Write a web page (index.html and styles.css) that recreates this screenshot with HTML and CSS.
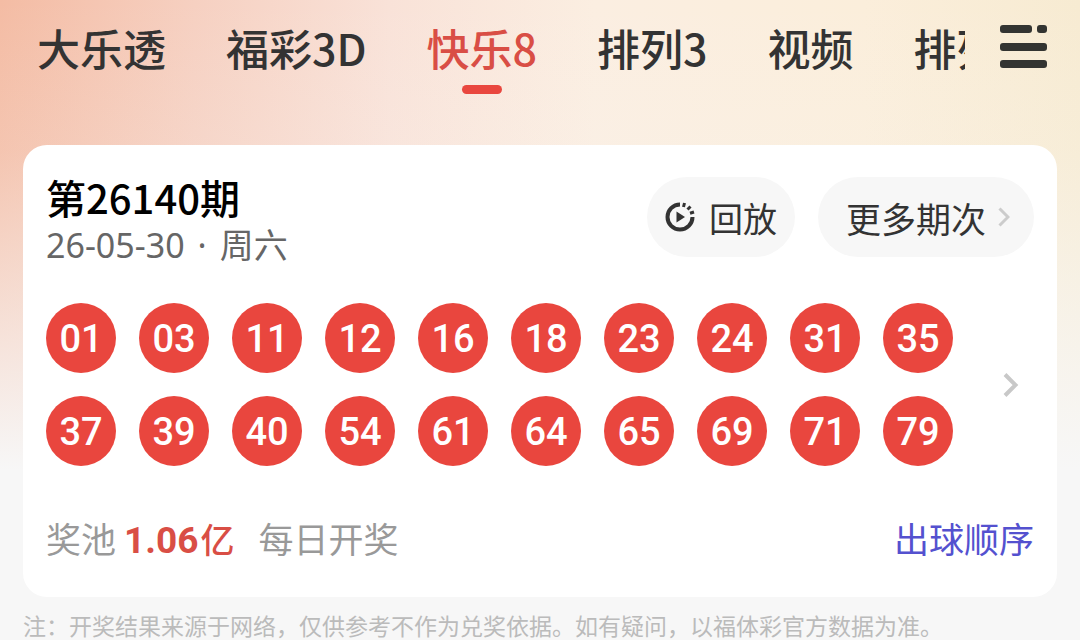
FILE: index.html
```
<!DOCTYPE html>
<html lang="zh-CN">
<head>
    <meta charset="UTF-8">
    <meta name="viewport" content="width=device-width, initial-scale=1.0">
    <title>快乐8</title>
    <link rel="stylesheet" href="styles.css">
</head>
<body>
    <!-- Top tabs -->
    <header class="top-bar">
        <nav class="tabs">
            <a class="tab" href="#">大乐透</a>
            <a class="tab" href="#">福彩3D</a>
            <a class="tab active" href="#">快乐8</a>
            <a class="tab" href="#">排列3</a>
            <a class="tab" href="#">视频</a>
            <a class="tab" href="#">排列5</a>
        </nav>
        <button class="menu-button" aria-label="菜单">
            <svg width="48" height="44" viewBox="0 0 48 44" fill="#333431">
                <rect x="0" y="0" width="32" height="8" rx="3"/>
                <rect x="37" y="0" width="10" height="8" rx="3"/>
                <rect x="0" y="18" width="47" height="8" rx="3"/>
                <rect x="0" y="35" width="47" height="8" rx="3"/>
            </svg>
        </button>
    </header>

    <main class="content">
        <!-- Draw result -->
        <section class="card">
            <div class="card-header">
                <div class="issue">
                    <h1>第26140期</h1>
                    <p class="date"><span>26-05-30</span><span>·</span><span>周六</span></p>
                </div>
                <div class="actions">
                    <button class="pill">
                        <svg width="30" height="30" viewBox="0 0 30 30" fill="none" stroke="#333">
                            <path d="M15 2.5A12.5 12.5 0 1 0 27.5 15" stroke-width="4"/>
                            <path d="M18.5 5l1-4M22.5 7.5l3-3M25 11.3l4-1.3" stroke-width="3"/>
                            <path d="M11.5 9.5v11l8.5-5.5z" fill="#333" stroke="none"/>
                        </svg>
                        回放
                    </button>
                    <button class="pill pill-more">
                        更多期次
                        <svg width="12" height="20" viewBox="0 0 12 20" fill="none" stroke="#ccc" stroke-width="3">
                            <path d="M1.5 1.5L10 10l-8.5 8.5"/>
                        </svg>
                    </button>
                </div>
            </div>

            <div class="result">
                <ul class="balls">
                    <li>01</li>
                    <li>03</li>
                    <li>11</li>
                    <li>12</li>
                    <li>16</li>
                    <li>18</li>
                    <li>23</li>
                    <li>24</li>
                    <li>31</li>
                    <li>35</li>
                    <li>37</li>
                    <li>39</li>
                    <li>40</li>
                    <li>54</li>
                    <li>61</li>
                    <li>64</li>
                    <li>65</li>
                    <li>69</li>
                    <li>71</li>
                    <li>79</li>
                </ul>
                <a class="detail-link" href="#" aria-label="详情">
                    <svg width="16" height="24" viewBox="0 0 16 24" fill="none" stroke="#c8c8c8" stroke-width="4">
                        <path d="M2 1.5L12.5 12 2 22.5"/>
                    </svg>
                </a>
            </div>

            <div class="card-footer">
                <span>奖池</span>
                <strong class="pool">1.06<span class="unit">亿</span></strong>
                <span>每日开奖</span>
                <a class="order-link" href="#">出球顺序</a>
            </div>
        </section>
        <p class="note">注：开奖结果来源于网络，仅供参考不作为兑奖依据。如有疑问，以福体彩官方数据为准。</p>
    </main>
</body>
</html>
```
FILE: styles.css
```
body {
    margin: 0;
    min-height: 100vh;
    overflow: hidden;
    font-family: "Noto Sans CJK SC", sans-serif;
    color: #333;
    background:
        linear-gradient(to bottom, rgba(247, 247, 247, 0) 0, rgba(247, 247, 247, 0.15) 150px, #f7f7f7 470px),
        linear-gradient(to right, #f4bca4 0, #f6d0c1 18%, #f9e2d8 36%, #fbeee1 55%, #fbeedb 80%, #f7ebd2 100%);
}
h1, p, ul {
    margin: 0;
    padding: 0;
}
a {
    color: inherit;
    text-decoration: none;
}
button {
    padding: 0;
    border: none;
    background: none;
    font: inherit;
    color: inherit;
    cursor: pointer;
}
svg {
    display: block;
    flex: none;
}

/* Top tabs */
.top-bar {
    display: flex;
    align-items: flex-start;
    height: 128px;
    padding: 17px 32px 0 37px;
}
.tabs {
    display: flex;
    flex: 1;
    gap: 60px;
    min-width: 0;
    overflow: hidden;
}
.tab {
    display: flex;
    flex: none;
    flex-direction: column;
    align-items: center;
    gap: 8px;
    font-size: 43px;
    font-weight: 500;
    line-height: 60px;
}
.tab.active {
    color: #d94e45;
}
.tab.active::after {
    content: "";
    width: 40px;
    height: 9px;
    border-radius: 5px;
    background: #e9473f;
}
.menu-button {
    margin: 8px 0 0 35px;
}

/* Result card */
.content {
    padding: 0 23px;
}
.card {
    padding: 32px 23px 31px;
    border-radius: 24px;
    background: #fff;
}
.card-header {
    display: flex;
    justify-content: space-between;
    align-items: flex-start;
}
.issue h1 {
    font-size: 40px;
    font-weight: 500;
    line-height: 40px;
    color: #000;
}
.date {
    display: flex;
    gap: 13px;
    font-family: "Noto Sans", "Noto Sans CJK SC", sans-serif;
    font-size: 34px;
    line-height: 56px;
    color: #666;
}
.actions {
    display: flex;
    gap: 23px;
}
.pill {
    display: flex;
    align-items: center;
    gap: 14px;
    height: 80px;
    padding: 0 18px;
    border-radius: 40px;
    background: #f7f7f7;
    font-size: 34px;
}
.pill-more {
    gap: 12px;
    padding: 0 24px 0 28px;
    font-size: 35px;
}
.result {
    display: flex;
    align-items: center;
    justify-content: space-between;
    margin-top: 30px;
}
.balls {
    display: grid;
    grid-template-columns: repeat(10, 70px);
    gap: 23px;
    list-style: none;
}
.balls li {
    height: 70px;
    border-radius: 50%;
    background: #e9463e;
    color: #fff;
    font-family: Roboto, sans-serif;
    font-size: 38px;
    font-weight: 500;
    line-height: 72px;
    text-align: center;
}
.detail-link {
    margin-right: 15px;
}
.card-footer {
    display: flex;
    align-items: baseline;
    margin-top: 47px;
    font-size: 35px;
    line-height: 50px;
    color: #999;
}
.pool {
    margin: 0 24px 0 8px;
    color: #d94e45;
    font-family: Roboto, sans-serif;
    font-size: 37px;
}
.unit {
    margin-left: 2px;
    font-family: "Noto Sans CJK SC", sans-serif;
    font-size: 34px;
    font-weight: 500;
}
.order-link {
    margin-left: auto;
    color: #5451cf;
}
.note {
    margin-top: 15px;
    font-size: 23px;
    line-height: 26px;
    color: #bbb;
    white-space: nowrap;
}
```
